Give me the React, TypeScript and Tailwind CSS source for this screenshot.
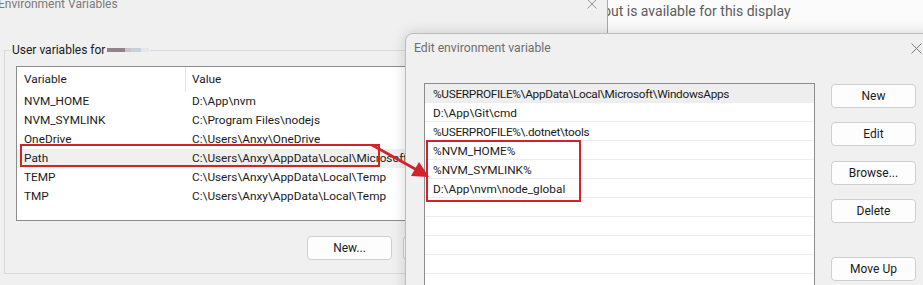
import React from "react";

const FONT = "font-['Roboto','Noto_Sans',sans-serif]";

function XIcon({ className = "" }: { className?: string }) {
  return (
    <svg viewBox="0 0 10 10" className={className} fill="none" stroke="currentColor" strokeWidth="0.9">
      <path d="M0.5 0.5 L9.5 9.5 M9.5 0.5 L0.5 9.5" />
    </svg>
  );
}

function WinButton({ label, className = "" }: { label: string; className?: string }) {
  return (
    <div
      className={`flex h-[24px] w-[85px] shrink-0 items-center justify-center rounded-[4px] border border-[#cfcfcf] bg-[#fdfdfd] text-[12px] text-[#1b1b1b] ${className}`}
    >
      {label}
    </div>
  );
}

const userVars = [
  { name: "NVM_HOME", value: "D:\\App\\nvm" },
  { name: "NVM_SYMLINK", value: "C:\\Program Files\\nodejs" },
  { name: "OneDrive", value: "C:\\Users\\Anxy\\OneDrive" },
  { name: "Path", value: "C:\\Users\\Anxy\\AppData\\Local\\Microsoft\\WindowsApps;D:\\App\\Git\\cmd", selected: true },
  { name: "TEMP", value: "C:\\Users\\Anxy\\AppData\\Local\\Temp" },
  { name: "TMP", value: "C:\\Users\\Anxy\\AppData\\Local\\Temp" },
];

const pathEntries = [
  "%USERPROFILE%\\AppData\\Local\\Microsoft\\WindowsApps",
  "D:\\App\\Git\\cmd",
  "%USERPROFILE%\\.dotnet\\tools",
  "%NVM_HOME%",
  "%NVM_SYMLINK%",
  "D:\\App\\nvm\\node_global",
  "",
  "",
  "",
  "",
  "",
];

export default function App() {
  return (
    <div className={`relative h-[285px] w-[923px] overflow-hidden bg-[#fbfbfb] ${FONT}`}>
      {/* Background app (settings) */}
      <div className="absolute left-[607px] top-0 flex h-[33px] w-[316px] items-start">
        <span className="ml-[-4px] whitespace-nowrap text-[14px] leading-[22px] text-[#5c5c5c]">
          out is available for this display
        </span>
      </div>

      {/* Back window: Environment Variables */}
      <div className="absolute left-0 top-[-11px] flex h-[310px] w-[608px] flex-col border-r border-[#a8a8a8] bg-[#f0f0f0]">
        <div className="flex h-[30px] items-center">
          <span className="ml-[-2px] whitespace-nowrap text-[12px] text-[#7a7a7a]">Environment Variables</span>
          <XIcon className="ml-auto mr-[10px] h-[10px] w-[10px] text-[#8a8a8a]" />
        </div>

        <fieldset className="ml-[4px] mt-[22px] h-[233px] w-[640px] border border-[#dadada] pl-[11px] pt-[7px]">
          <legend className="ml-[-5px] flex items-center px-[1px] text-[12px] text-[#1b1b1b]">
            <span>User variables for</span>
            <span className="ml-[2px] flex items-center blur-[0.6px]">
              <span className="h-[4px] w-[18px] bg-[#8e8489]" />
              <span className="h-[4px] w-[6px] bg-[#c9c4c7]" />
              <span className="h-[4px] w-[10px] bg-[#c6d1dc]" />
              <span className="h-[4px] w-[8px] bg-[#e2e7ec]" />
            </span>
          </legend>

          <div className="flex h-[155px] w-[600px] flex-col border border-[#8c8c8c] bg-white text-[11.8px] text-[#1b1b1b]">
            <div className="flex h-[25px] shrink-0 items-center">
              <div className="w-[168px] pl-[7px]">Variable</div>
              <div className="h-full w-px bg-[#e5e5e5]" />
              <div className="pl-[6px]">Value</div>
            </div>
            {userVars.map((v) => (
              <div
                key={v.name}
                className={`flex h-[19px] shrink-0 items-center whitespace-nowrap pt-[1px] ${v.selected ? "bg-[#f0f0f0]" : ""}`}
              >
                <div className="w-[169px] pl-[7px]">{v.name}</div>
                <div className="pl-[6px]">{v.value}</div>
              </div>
            ))}
          </div>

          <div className="mt-[15px] flex gap-[11px] pl-[291px]">
            <WinButton label="New..." />
            <WinButton label="Edit..." />
            <WinButton label="Delete" />
          </div>
        </fieldset>
      </div>

      {/* Front dialog: Edit environment variable */}
      <div className="absolute left-[405px] top-[33px] flex h-[280px] w-[530px] flex-col rounded-tl-[8px] border border-[#bcbcbc] bg-[#f0f0f0] shadow-[0_0_14px_rgba(0,0,0,0.16)]">
        <div className="flex h-[29px] shrink-0 items-center">
          <span className="ml-[8px] whitespace-nowrap text-[12.2px] text-[#6e6e6e]">Edit environment variable</span>
          <XIcon className="ml-auto mr-[12px] h-[11px] w-[11px] text-[#7a7a7a]" />
        </div>

        <div className="ml-[18px] mt-[20px] flex">
          <div className="flex h-[220px] w-[391px] flex-col border border-[#8c8c8c] bg-white text-[11.8px] text-[#1b1b1b]">
            {pathEntries.map((p, i) => (
              <div
                key={i}
                className={`flex h-[19px] shrink-0 items-center whitespace-nowrap border-b border-[#ececec] pl-[8px] pt-[3px] ${
                  i === 0 ? "bg-[#eeeeee] tracking-[-0.3px]" : ""
                } ${i === 2 ? "tracking-[-0.3px]" : ""}`}
              >
                {p}
              </div>
            ))}
          </div>

          <div className="ml-[16px] flex flex-col">
            <WinButton label="New" className="mt-[1px] h-[23px]" />
            <WinButton label="Edit" className="mt-[14px] h-[23px]" />
            <WinButton label="Browse..." className="mt-[15px] h-[23px]" />
            <WinButton label="Delete" className="mt-[14px] h-[23px]" />
            <WinButton label="Move Up" className="mt-[34px] h-[23px]" />
          </div>
        </div>
      </div>

      {/* Annotations */}
      <div className="absolute left-[20px] top-[144px] h-[23px] w-[360px] border-2 border-[#d2232b]" />
      <div className="absolute left-[426px] top-[140px] h-[62px] w-[155px] border-2 border-[#d2232b]" />
      <svg className="absolute left-0 top-0" width="923" height="285" viewBox="0 0 923 285">
        <line x1="372" y1="145" x2="417" y2="170" stroke="#d2232b" strokeWidth="2.6" />
        <polygon points="429,177 411,176 419,162" fill="#d2232b" />
      </svg>
    </div>
  );
}
